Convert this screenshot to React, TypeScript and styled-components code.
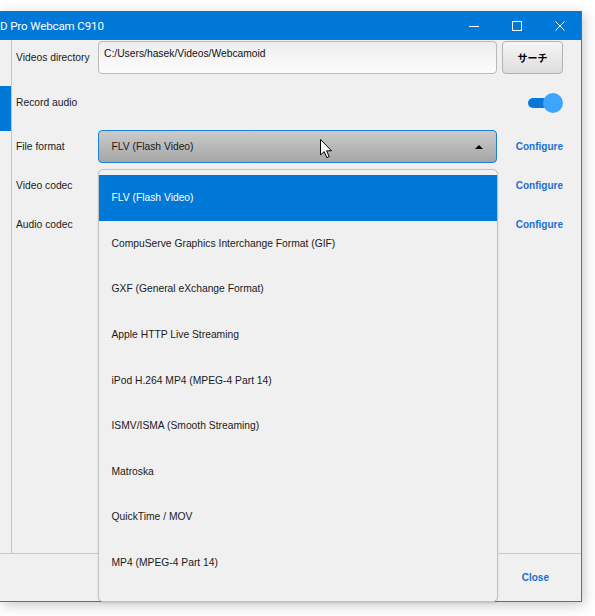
import React from "react";
import styled, { createGlobalStyle } from "styled-components";

const GlobalStyle = createGlobalStyle`
	html, body {
		margin: 0;
		padding: 0;
		background: #ffffff;
	}
	body {
		font-family: "Liberation Sans", Arial, sans-serif;
		overflow: hidden;
	}
	* {
		box-sizing: border-box;
	}
`;

const formats = [
	"FLV (Flash Video)",
	"CompuServe Graphics Interchange Format (GIF)",
	"GXF (General eXchange Format)",
	"Apple HTTP Live Streaming",
	"iPod H.264 MP4 (MPEG-4 Part 14)",
	"ISMV/ISMA (Smooth Streaming)",
	"Matroska",
	"QuickTime / MOV",
	"MP4 (MPEG-4 Part 14)",
];

const App: React.FC = () => {
	return (
		<Page>
			<GlobalStyle />
			<Window>
				<TitleBar>
					<TitleText>D Pro Webcam C910</TitleText>
					<WinButton>
						<svg width='10' height='10' viewBox='0 0 10 10'>
							<path d='M0 5.5 H10' stroke='#fff' strokeWidth='1' />
						</svg>
					</WinButton>
					<WinButton>
						<svg width='10' height='10' viewBox='0 0 10 10'>
							<rect x='0.5' y='0.5' width='9' height='9' fill='none' stroke='#fff' strokeWidth='1' />
						</svg>
					</WinButton>
					<WinButton>
						<svg width='10' height='10' viewBox='0 0 10 10'>
							<path d='M0.5 0.5 L9.5 9.5 M9.5 0.5 L0.5 9.5' stroke='#fff' strokeWidth='1' />
						</svg>
					</WinButton>
				</TitleBar>

				<Upper>
					<Sidebar>
						<SideItem />
						<SideItem $active />
					</Sidebar>

					<Form>
						<Label>Videos directory</Label>
						<PathField>C:/Users/hasek/Videos/Webcamoid</PathField>
						<Action>
							<SearchButton>サーチ</SearchButton>
						</Action>

						<Label>Record audio</Label>
						<div />
						<Action>
							<Switch>
								<Track />
								<Knob />
							</Switch>
						</Action>

						<Label>File format</Label>
						<Combo>
							<span>FLV (Flash Video)</span>
							<Arrow />
							<Pointer width='13' height='20' viewBox='0 0 13 20'>
								<path
									d='M0.5 0.5 L0.5 16 L4.2 12.6 L6.8 18.6 L9.2 17.6 L6.6 11.8 L11.5 11.8 Z'
									fill='#fff'
									stroke='#000'
									strokeWidth='1'
									strokeLinejoin='round'
								/>
							</Pointer>
							<Popup>
								{formats.map((f, i) => (
									<Option key={f} $selected={i === 0}>
										{f}
									</Option>
								))}
							</Popup>
						</Combo>
						<Action>
							<LinkText>Configure</LinkText>
						</Action>

						<Label>Video codec</Label>
						<div />
						<Action>
							<LinkText>Configure</LinkText>
						</Action>

						<Label>Audio codec</Label>
						<div />
						<Action>
							<LinkText>Configure</LinkText>
						</Action>
					</Form>
				</Upper>

				<Footer>
					<LinkText>Close</LinkText>
				</Footer>
			</Window>
		</Page>
	);
};

export default App;

const Page = styled.div`
	width: 595px;
	height: 616px;
	padding-top: 11px;
	background: #ffffff;
	overflow: hidden;
`;

const Window = styled.div`
	width: 582px;
	height: 591px;
	background: #f0f0f0;
	border-right: 1px solid #1a7fd6;
	border-bottom: 1px solid #1a7fd6;
	box-shadow: 2px 3px 12px rgba(0, 0, 0, 0.22);
	display: flex;
	flex-direction: column;
`;

const TitleBar = styled.div`
	height: 29px;
	flex: none;
	background: #0078d7;
	display: flex;
	align-items: center;
	color: #ffffff;
`;

const TitleText = styled.div`
	flex: 1;
	font-family: Roboto, "Liberation Sans", sans-serif;
	font-size: 11.5px;
	letter-spacing: -0.1px;
`;

const WinButton = styled.div`
	width: 43px;
	height: 29px;
	display: flex;
	align-items: center;
	justify-content: center;

	svg {
		display: block;
	}
`;

const Upper = styled.div`
	flex: 1;
	display: flex;
	min-height: 0;
`;

const Sidebar = styled.div`
	width: 12px;
	flex: none;
	border-right: 1px solid #c4c4c4;
	padding-top: 1px;
`;

const SideItem = styled.div<{ $active?: boolean }>`
	height: 45px;
	background: ${(p) => (p.$active ? "#0078d7" : "transparent")};
`;

const Form = styled.div`
	flex: 1;
	padding: 1px 0 0 4px;
	display: grid;
	grid-template-columns: 82px 399px 84px;
	grid-template-rows: 33px 44px 33px 33px 33px;
	row-gap: 6px;
	align-content: start;
`;

const Label = styled.div`
	align-self: center;
	font-size: 10.3px;
	color: #1a1a1a;
`;

const PathField = styled.div`
	height: 33px;
	border: 1px solid #b9b9b9;
	border-radius: 4px;
	background: linear-gradient(#ededed, #fdfdfd);
	padding: 6px 5px;
	font-size: 10.3px;
	color: #111111;
`;

const Action = styled.div`
	display: flex;
	align-items: center;
	justify-content: flex-end;
	padding-right: 18px;
`;

const SearchButton = styled.div`
	width: 61px;
	height: 33px;
	border: 1px solid #b3b3b3;
	border-radius: 4px;
	background: linear-gradient(#f6f6f6, #dddddd);
	display: flex;
	align-items: center;
	justify-content: center;
	font-family: "Noto Sans CJK JP", sans-serif;
	font-size: 10px;
	font-weight: 700;
	color: #000000;
`;

const Switch = styled.div`
	display: flex;
	align-items: center;
	margin-top: 2px;
`;

const Track = styled.div`
	width: 20px;
	height: 10px;
	border-radius: 5px 0 0 5px;
	background: #0a78d7;
`;

const Knob = styled.div`
	width: 20px;
	height: 20px;
	margin-left: -5px;
	border-radius: 50%;
	background: #3ea5ff;
`;

const Combo = styled.div`
	position: relative;
	height: 33px;
	border: 1.5px solid #1c7fd9;
	border-radius: 4px;
	background: linear-gradient(#cbcbcb, #a6a6a6);
	display: flex;
	align-items: center;
	justify-content: space-between;
	padding: 0 13px 0 12.5px;
	font-size: 10.3px;
	color: #1a1a1a;
`;

const Arrow = styled.span`
	width: 0;
	height: 0;
	border-left: 4px solid transparent;
	border-right: 4px solid transparent;
	border-bottom: 4px solid #000000;
`;

const Pointer = styled.svg`
	position: absolute;
	left: 221px;
	top: 7.5px;
`;

const Popup = styled.div`
	position: absolute;
	top: calc(100% + 6.5px);
	left: -1.5px;
	right: -1.5px;
	height: 433px;
	border: 1.5px solid #c2c2c2;
	border-radius: 5px;
	background: #f0f0f0;
	padding-top: 5.5px;
	overflow: hidden;
	z-index: 5;
	box-shadow: 0 1px 2px rgba(0, 0, 0, 0.12);
`;

const Option = styled.div<{ $selected?: boolean }>`
	height: 45.6px;
	display: flex;
	align-items: center;
	padding-left: 13px;
	font-size: 10.3px;
	color: ${(p) => (p.$selected ? "#ffffff" : "#1a1a1a")};
	background: ${(p) => (p.$selected ? "#0078d7" : "transparent")};
`;

const LinkText = styled.div`
	font-size: 10px;
	font-weight: 700;
	color: #1a6fd6;
`;

const Footer = styled.div`
	height: 48px;
	flex: none;
	border-top: 1px solid #c8c8c8;
	display: flex;
	align-items: center;
	justify-content: flex-end;
	padding-right: 32px;
`;
